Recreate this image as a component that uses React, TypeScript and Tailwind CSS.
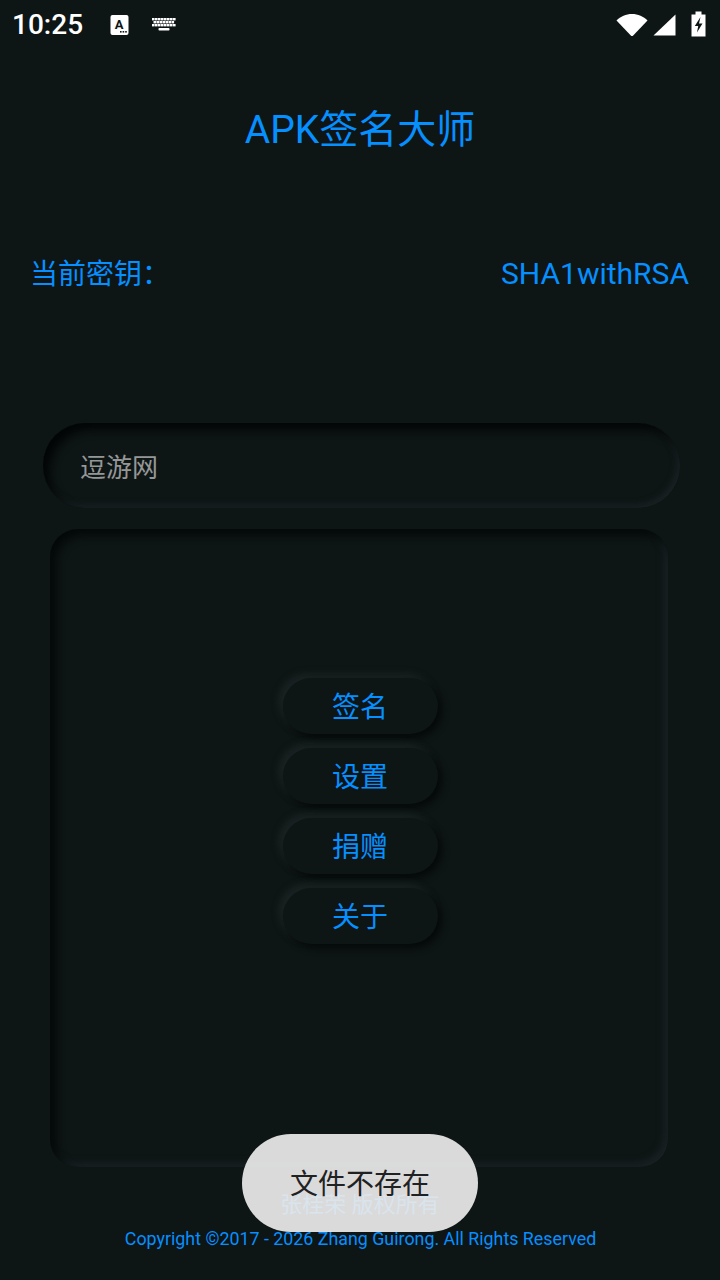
const keyRows = [
  { y: 1, xs: [0, 3, 6, 9, 12, 15, 18, 21] },
  { y: 4, xs: [1.5, 4.5, 7.5, 10.5, 13.5, 16.5, 19.5] },
  { y: 7, xs: [0, 3, 6, 9, 12, 15, 18, 21] },
];

function StatusBar() {
  return (
    <div className="flex h-12 items-center pt-[1px] text-white">
      <span className="ml-[12px] w-[71px] text-[28px] leading-none font-medium">10:25</span>
      <svg className="ml-[27px]" width="20" height="22" viewBox="0 0 20 22">
        <rect x="0.5" y="1" width="18" height="20" rx="2" fill="#fff" />
        <text x="9" y="14.5" textAnchor="middle" fontSize="13" fontWeight="700" fill="#0e1515" fontFamily="Roboto">A</text>
        <rect x="10" y="17" width="1.6" height="1.6" fill="#0e1515" />
        <rect x="12.6" y="17" width="1.6" height="1.6" fill="#0e1515" />
        <rect x="15.2" y="17" width="1.6" height="1.6" fill="#0e1515" />
      </svg>
      <svg className="ml-[22px]" width="25" height="16" viewBox="0 0 25 16" fill="#fff">
        {keyRows.map((row) =>
          row.xs.map((x) => <rect key={`${row.y}-${x}`} x={x} y={row.y} width="2.600" height="2.400" />),
        )}
        <rect x="6.500" y="11" width="11" height="2.600" rx="0.800" />
      </svg>
      <svg className="ml-auto" width="32" height="24" viewBox="0 0 32 24" fill="#fff">
        <path d="M0.500 7.500C4.500 3.400 10 1 16 1s11.500 2.400 15.500 6.500L17.200 22.500a1.700 1.700 0 0 1-2.400 0z" />
      </svg>
      <svg className="ml-[5px]" width="23" height="22" viewBox="0 0 23 22" fill="#fff">
        <path d="M22.500 0.500V21.500H0.500z" />
      </svg>
      <svg className="mr-[14px] mb-[2px] ml-[15px]" width="15" height="26" viewBox="0 0 15 26" fill="#fff">
        <path d="M4.500 0.500h6v3h4v22H0.500v-22h4z" />
        <path d="M9.500 6 3.800 15h3.400l-1.200 6.500L11.500 12.500H8z" fill="#0e1515" />
      </svg>
    </div>
  );
}

function NeuButton({ label }: { label: string }) {
  return (
    <button className="flex h-14 w-[155px] items-center justify-center rounded-[28px] bg-[#0e1515] pt-[4px] pr-[1px] text-[28px] leading-none text-[#058fff] shadow-[4px_4px_7px_#050909,-4px_-4px_7px_#1b2424]">
      {label}
    </button>
  );
}

export default function App() {
  return (
    <div
      className="relative flex h-[1280px] w-[720px] flex-col overflow-hidden bg-[#0e1515]"
      style={{ fontFamily: 'Roboto, "Noto Sans CJK SC", sans-serif' }}
    >
      <StatusBar />
      <h1 className="mt-[56px] text-center text-[39px] leading-[52px] font-normal text-[#058fff]">APK签名大师</h1>
      <div className="mt-[98px] flex h-10 items-center justify-between pr-[31px] pl-[30px] text-[#058fff]">
        <span className="pt-[2px] text-[28px] leading-10">当前密钥：</span>
        <span className="text-[30px] leading-10">SHA1withRSA</span>
      </div>
      <div className="mt-[129px] ml-[43px] flex h-[85px] w-[637px] items-center rounded-[42px] bg-[#0e1515] pt-[5px] pl-[37px] text-[26px] text-[#959797] shadow-[inset_7px_7px_9px_#030606,inset_-3px_-3px_6px_#1a2224]">
        逗游网
      </div>
      <div className="mt-[21px] ml-[50px] flex h-[638px] w-[618px] flex-col items-center justify-center gap-[14px] rounded-[28px] bg-[#0e1515] pb-[74px] pl-[3px] shadow-[inset_6px_6px_8px_#040808,inset_-4px_-4px_7px_#1a2224]">
        <NeuButton label="签名" />
        <NeuButton label="设置" />
        <NeuButton label="捐赠" />
        <NeuButton label="关于" />
      </div>
      <p className="mt-[23px] text-center text-[22px] leading-[30px] text-[#058fff]">张桂荣 版权所有</p>
      <p className="mt-[7px] pl-[1px] text-center text-[17.830px] leading-6 text-[#058fff]">Copyright ©2017 - 2026 Zhang Guirong. All Rights Reserved</p>
      <div className="absolute top-[1134px] left-[242px] flex h-[98px] w-[236px] items-center justify-center rounded-[49px] bg-[rgba(235,235,235,0.92)] pt-[3px] text-[28px] text-[#1f2122]">
        文件不存在
      </div>
    </div>
  );
}
